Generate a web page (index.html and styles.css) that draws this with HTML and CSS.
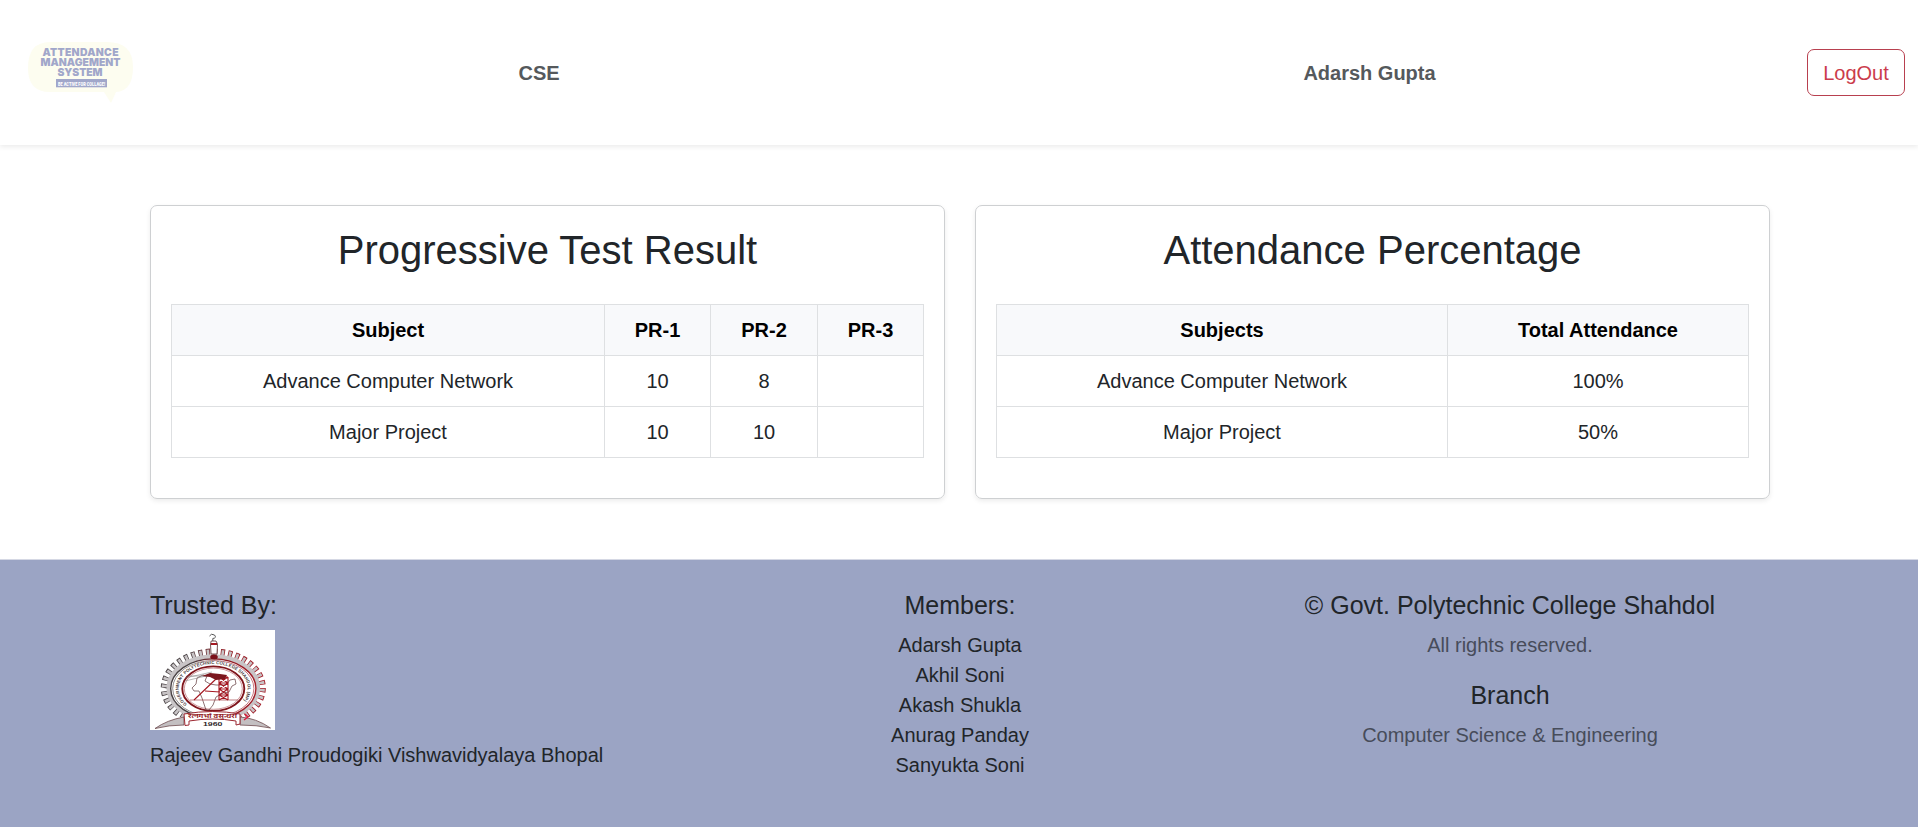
FILE: index.html
```html
<!DOCTYPE html>
<html lang="en">
<head>
<meta charset="utf-8">
<title>Attendance Management System</title>
<link rel="stylesheet" href="styles.css">
</head>
<body>
<header class="navbar">
  <svg class="logo" width="124" height="80" viewBox="0 0 124 80" role="img" aria-label="Attendance Management System">
    <path class="bubble" d="M44 9H107Q133 9 133 34Q133 58 116 59L111 70L104 59H50Q28 59 28 35Q28 9 50 9Z"/>
    <g class="logo-text">
      <text x="42.5" y="22.5" textLength="76" lengthAdjust="spacing">ATTENDANCE</text>
      <text x="40.5" y="32.9" textLength="80" lengthAdjust="spacing">MANAGEMENT</text>
      <text x="57.5" y="43.4" textLength="45" lengthAdjust="spacing">SYSTEM</text>
    </g>
    <rect class="logo-strip" x="56" y="46" width="51" height="8.3"/>
    <text class="logo-tag" x="58" y="52.5" textLength="47" lengthAdjust="spacingAndGlyphs">BE ACTIVE FOR COLLAGE!</text>
  </svg>
  <div class="nav-label">CSE</div>
  <div class="nav-label">Adarsh Gupta</div>
  <button class="logout" type="button">LogOut</button>
</header>

<main class="container cards">
  <section class="card">
    <h2>Progressive Test Result</h2>
    <table class="results">
      <colgroup><col class="c-subject"><col class="c-test"><col class="c-test-mid"><col></colgroup>
      <thead><tr><th>Subject</th><th>PR-1</th><th>PR-2</th><th>PR-3</th></tr></thead>
      <tbody>
        <tr><td>Advance Computer Network</td><td>10</td><td>8</td><td></td></tr>
        <tr><td>Major Project</td><td>10</td><td>10</td><td></td></tr>
      </tbody>
    </table>
  </section>
  <section class="card">
    <h2>Attendance Percentage</h2>
    <table>
      <colgroup><col class="c-wide"><col></colgroup>
      <thead><tr><th>Subjects</th><th>Total Attendance</th></tr></thead>
      <tbody>
        <tr><td>Advance Computer Network</td><td>100%</td></tr>
        <tr><td>Major Project</td><td>50%</td></tr>
      </tbody>
    </table>
  </section>
</main>

<footer class="footer">
  <div class="container footer-cols">
    <div class="col col-left">
      <h5>Trusted By:</h5>
      <svg class="emblem" width="125" height="100" viewBox="0 0 125 100" role="img" aria-label="Government Polytechnic College Shahdol emblem">
        <rect width="125" height="100" fill="#fff"/>
        <defs>
          <linearGradient id="rim" x1="0" x2="1"><stop offset=".25" stop-color="#4b4446"/><stop offset=".6" stop-color="#8e1820"/><stop offset="1" stop-color="#a5202b"/></linearGradient>
          <path id="arc" d="M37 74.2A34.5 24.4 0 1 1 89.6 74.2"/>
          <clipPath id="above"><path d="M0 0H125V87H0Z"/></clipPath>
        </defs>
        <!-- gear -->
        <g clip-path="url(#above)">
          <ellipse cx="63.3" cy="58" rx="49" ry="36" pathLength="360" fill="none" stroke="url(#rim)" stroke-width="7" stroke-dasharray="5.6 4.4"/>
          <ellipse cx="63.3" cy="58" rx="48.6" ry="35.6" pathLength="360" fill="none" stroke="#c8c4c6" stroke-width="6" stroke-dasharray="3.6 6.4" stroke-dashoffset="-1"/>
          <ellipse cx="63.3" cy="58" rx="46.8" ry="33.8" fill="#c8c4c6"/>
        </g>
        <ellipse cx="63.3" cy="58.5" rx="42.6" ry="29.6" fill="#fff" stroke="url(#rim)" stroke-width="1.4"/>
        <ellipse cx="63.3" cy="58.5" rx="40.6" ry="28" fill="none" stroke="url(#rim)" stroke-width=".6"/>
        <ellipse cx="63.3" cy="58.7" rx="31" ry="22.3" fill="none" stroke="#80151c" stroke-width="1.9"/>
        <ellipse cx="63.3" cy="58.7" rx="29" ry="20.6" fill="none" stroke="#a1333a" stroke-width=".5"/>
        <text class="ring-text"><textPath href="#arc" textLength="124" lengthAdjust="spacing">GOVERNMENT POLYTECHNIC COLLEGE SHAHDOL (MP)</textPath></text>
        <!-- map outline and derrick -->
        <path d="M53 45L57 46L55 51L60 54L66 55L76 55L80 50L85 49L86 54L82 56L79 62L73 63L66 67L63 75L59 80L56 80L52 68L49 61L44 61L42 58L46 54L47 48Z" fill="none" stroke="#5e373a" stroke-width=".7"/>
        <path d="M35 48L62 42M35 51L60 45M37 46L58 46" stroke="#777" stroke-width=".5"/>
        <path d="M40 70H88" stroke="#a2464b" stroke-width=".7"/>
        <path d="M69 70V47M78 70V47M69 47H78M69 53H78M69 59H78M69 65H78M69 47L78 53M78 47L69 53M69 53L78 59M78 53L69 59M69 59L78 65M78 59L69 65M69 65L78 70M78 65L69 70M44 70L67 48M55 61L70 62" fill="none" stroke="#a51822" stroke-width="1.1"/>
        <path d="M52 46L60 43L70 44L77 45L75 49L66 50L60 47Z" fill="#7b171e"/>
        <!-- lamp -->
        <path d="M60.5 14L61.2 11H66L67.5 14L67 24H61Z" fill="#fff" stroke="#50292c" stroke-width=".8"/>
        <path d="M61 14H67" stroke="#a51822" stroke-width="2"/>
        <path d="M59.5 6Q61 3 64.5 5Q67 8 62.8 8.5V11" fill="none" stroke="#555" stroke-width="1"/>
        <ellipse cx="64" cy="27" rx="3.8" ry="2.5" fill="#7b101a"/>
        <!-- ribbon -->
        <path d="M5 98.5Q17 90 34 87V95Q19 95 5 98.5ZM120.5 98Q106 88 90 87V95Q107 95 120.5 98Z" fill="#c3bfc1" stroke="#6d4a4e" stroke-width=".8"/>
        <path d="M34 84Q63 79 90 84V94L86 95V91Q63 87 39 91V95L35 95.5Z" fill="#fff" stroke="#9c2730" stroke-width="1"/>
        <path d="M95 84L98 87L94 90" fill="none" stroke="#e0183a" stroke-width="1.3"/>
        <text class="motto" x="38" y="88.3" textLength="49" lengthAdjust="spacingAndGlyphs">रत्नगर्भा वसुन्धरा</text>
        <text class="year" x="53" y="96" textLength="19.5" lengthAdjust="spacingAndGlyphs">1960</text>
      </svg>
      <p>Rajeev Gandhi Proudogiki Vishwavidyalaya Bhopal</p>
    </div>
    <div class="col">
      <h5>Members:</h5>
      <ul>
        <li>Adarsh Gupta</li>
        <li>Akhil Soni</li>
        <li>Akash Shukla</li>
        <li>Anurag Panday</li>
        <li>Sanyukta Soni</li>
      </ul>
    </div>
    <div class="col">
      <h5>© Govt. Polytechnic College Shahdol</h5>
      <p class="muted">All rights reserved.</p>
      <h5>Branch</h5>
      <p class="muted">Computer Science &amp; Engineering</p>
    </div>
  </div>
</footer>
</body>
</html>
```
FILE: styles.css
```css
* { box-sizing: border-box; }

body {
  margin: 0;
  min-height: 827px;
  display: flex;
  flex-direction: column;
  overflow: hidden;
  background: #fff;
  color: #212529;
  font: 20px/30px "Liberation Sans", Arial, sans-serif;
}

h2, h5, p, ul { margin: 0; padding: 0; font-weight: 400; }
ul { list-style: none; }

.navbar {
  height: 145px;
  padding-right: 13px;
  display: grid;
  grid-template-columns: 124px 830px 831px 1fr;
  align-items: center;
  box-shadow: 0 2px 5px rgba(0, 0, 0, .08);
}
.logo { overflow: visible; }
.bubble { fill: #fdfdf0; }
.logo-text { fill: #a1a7ca; font: 900 10.4px Inter, sans-serif; }
.logo-strip { fill: #a1a7ca; }
.logo-tag { fill: #fff; font: 900 6px Roboto, sans-serif; }
.nav-label { text-align: center; font-weight: 700; color: #55595c; }
.logout {
  justify-self: end;
  width: 98px;
  height: 47px;
  padding: 0;
  border: 1px solid #b8404f;
  border-radius: 7px;
  background: #fff;
  color: #cb3c4c;
  font: inherit;
}

.container { width: 1650px; margin-left: 135px; padding: 0 15px; }

.cards { display: flex; gap: 30px; padding-top: 60px; padding-bottom: 60px; }
.card {
  flex: 1;
  height: 294px;
  padding: 20px;
  border: 1px solid #ced0d2;
  border-radius: 7px;
  box-shadow: 0 2px 5px rgba(0, 0, 0, .08);
}
.card h2 { font-size: 40px; line-height: 48px; margin-bottom: 30px; text-align: center; }

table { width: 753px; table-layout: fixed; border-collapse: collapse; text-align: center; }
th, td { height: 51px; padding: 0; border: 1px solid #dee0e2; }
th { background: #f8f9fb; color: #000; }
.c-subject { width: 433px; }
.c-test { width: 106px; }
.c-test-mid { width: 107px; }
.c-wide { width: 451px; }

.footer {
  flex: 1;
  padding-top: 30px;
  border-top: 1px solid #d5d8e4;
  background: #9ba4c4;
}
.footer-cols { padding: 0; display: grid; grid-template-columns: repeat(3, 1fr); }
.col { padding: 0 15px; text-align: center; }
.col-left { text-align: left; }
.col h5 { font-size: 25px; line-height: 30px; margin-bottom: 10px; }
.muted { margin-bottom: 20px; color: #474c5a; }

.emblem { display: block; margin-bottom: 10px; }
.ring-text { font: 700 4.4px "Liberation Sans", sans-serif; fill: #4a3d40; }
.motto { font: 700 6px "Noto Sans", sans-serif; fill: #941e28; }
.year { font: 700 6px "Liberation Sans", sans-serif; fill: #302629; }
```
